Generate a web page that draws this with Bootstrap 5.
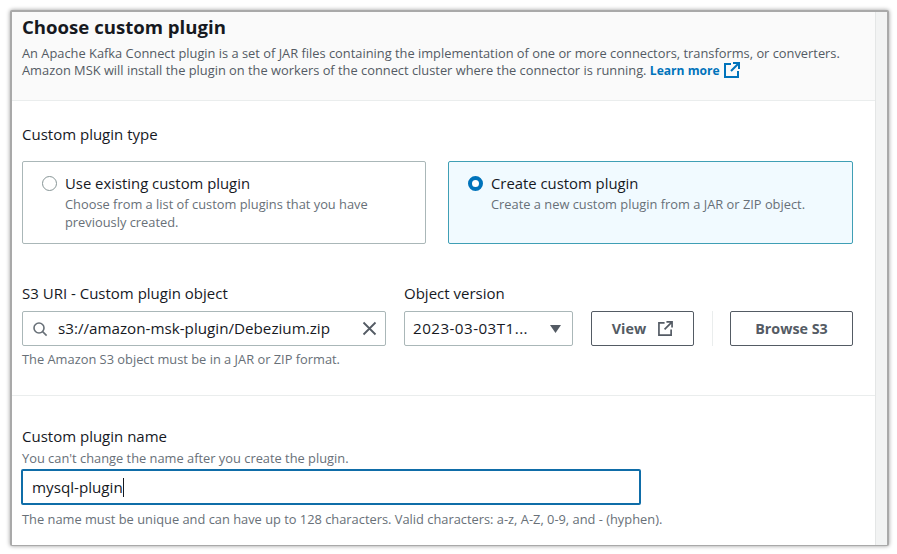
<!DOCTYPE html>
<html lang="en">
<head>
  <meta charset="UTF-8" />
  <meta name="viewport" content="width=device-width, initial-scale=1" />
  <title>Choose custom plugin</title>
  <link href="https://cdn.jsdelivr.net/npm/bootstrap@5.3.0/dist/css/bootstrap.min.css" rel="stylesheet" />
  <style>
    html, body { height: 554px; overflow: hidden; }
    body {
      background: #fff;
      font-family: "Open Sans", "Liberation Sans", sans-serif;
      color: #16191f;
      padding: 10px 8px 8px 10px;
    }
    .shot-frame {
      height: 536px;
      background: #fff;
      border: 1px solid #a9a9a9;
      border-left-width: 2px;
      border-top-width: 2px;
      border-right-width: 2px;
      border-radius: 2px;
      box-shadow: 0 0 4px rgba(0,0,0,.4);
      overflow: hidden;
    }
    .shot-main { flex: 1 1 auto; min-width: 0; }
    .shot-strip { width: 12px; background: #f2f3f3; border-left: 1px solid #e4e6e6; }
    .panel-head {
      height: 89px;
      background: #fafafa;
      border-bottom: 1px solid #eaeded;
      padding: 3px 12px 0 10px;
    }
    .panel-head h2 { font-size: 18.6px; font-weight: 700; line-height: 24px; margin: 0 0 6px; color: #16191f; }
    .panel-head p { font-size: 12.85px; line-height: 17px; margin: 0; color: #545b64; white-space: nowrap; }
    .learn-link { color: #0073bb; font-weight: 700; font-size: 12.1px; text-decoration: none; }
    .panel-body-top { padding: 24px 13px 0 10px; border-bottom: 1px solid #eaeded; height: 295px; }
    .field-label { font-size: 15px; line-height: 18px; color: #16191f; margin: 0; white-space: nowrap; }
    .tile-row { display: flex; gap: 22px; margin-top: 18px; }
    .tile {
      flex: 0 0 404px;
      height: 83px;
      border: 1px solid #aab7b8;
      border-radius: 2px;
      padding: 12px 19px;
      display: flex;
      gap: 8px;
    }
    .tile.picked { flex-basis: 405px; background: #f1faff; border-color: #3f9fb5; }
    .dot { width: 15px; height: 15px; border-radius: 50%; border: 1px solid #879596; margin-top: 2px; flex: none; background: #fff; }
    .dot.on { border: 4.5px solid #0073bb; }
    .tile-title { font-size: 14.85px; line-height: 19px; color: #16191f; white-space: nowrap; }
    .tile-desc { font-size: 12.85px; line-height: 17.5px; color: #687078; white-space: nowrap; margin-top: 3px; }
    .s3-row { display: flex; margin-top: 40px; }
    .s3-uri { width: 364px; margin-right: 18px; }
    .s3-ver { width: 169px; margin-right: 18px; }
    .box-ctl {
      height: 35px;
      border: 1px solid #aab7b8;
      border-radius: 2px;
      background: #fff;
      display: flex;
      align-items: center;
      font-size: 15.2px;
      color: #16191f;
      margin-top: 9px;
    }
    .box-ctl .val { flex: 1 1 auto; white-space: nowrap; overflow: hidden; }
    .uri-icon { margin: 0 10px 0 9px; flex: none; }
    .version-val { letter-spacing: .45px; }
    .help-line { font-size: 12.85px; line-height: 14px; color: #687078; margin: 6px 0 0; white-space: nowrap; }
    .aws-btn {
      height: 35px;
      border: 1px solid #545b64;
      border-radius: 2px;
      background: #fff;
      color: #545b64;
      font-size: 14.3px;
      font-weight: 700;
      padding: 0;
      display: flex;
      align-items: center;
      justify-content: center;
      gap: 12px;
      margin-top: 27px;
    }
    .aws-btn:hover { background: #fff; color: #545b64; border-color: #545b64; }
    .btn-view { width: 103px; }
    .btn-browse { width: 123px; }
    .v-rule { width: 1px; height: 35px; background: #eaeded; margin: 27px 17px 0 18px; }
    .panel-body-end { padding: 31px 10px 0 10px; }
    .hint-top { font-size: 12.85px; line-height: 14px; color: #687078; margin: 6px 0 4px; white-space: nowrap; }
    .name-input.form-control {
      width: 620px;
      height: 36px;
      margin-left: -1px;
      border: 2px solid #0f6da8;
      border-radius: 2px;
      box-shadow: none;
      font-size: 15.2px;
      color: #16191f;
      padding: 0 9px;
      display: flex;
      align-items: center;
      background: #fff;
    }
    .name-input + .help-line { margin-top: 7px; }
    .caret-bar { display: inline-block; width: 1px; height: 19px; background: #16191f; }
  </style>
</head>
<body>
  <div class="shot-frame d-flex">
    <div class="shot-main">
      <div class="panel-head">
        <h2>Choose custom plugin</h2>
        <p>An Apache Kafka Connect plugin is a set of JAR files containing the implementation of one or more connectors, transforms, or converters.<br>Amazon MSK will install the plugin on the workers of the connect cluster where the connector is running. <a class="learn-link" href="#">Learn more
          <svg width="16" height="16" viewBox="0 0 16 16" fill="none" stroke="#0073bb" stroke-width="2" style="vertical-align:-3px;margin-left:1px"><path d="M7 2H1v13h13V9"/><path d="M9 1h6v6M15 1 7 9"/></svg></a></p>
      </div>

      <div class="panel-body-top">
        <p class="field-label">Custom plugin type</p>
        <div class="tile-row">
          <div class="tile">
            <span class="dot"></span>
            <div>
              <div class="tile-title">Use existing custom plugin</div>
              <div class="tile-desc">Choose from a list of custom plugins that you have<br>previously created.</div>
            </div>
          </div>
          <div class="tile picked">
            <span class="dot on"></span>
            <div>
              <div class="tile-title">Create custom plugin</div>
              <div class="tile-desc">Create a new custom plugin from a JAR or ZIP object.</div>
            </div>
          </div>
        </div>

        <div class="s3-row">
          <div class="s3-uri">
            <p class="field-label">S3 URI - Custom plugin object</p>
            <div class="box-ctl">
              <svg class="uri-icon" width="16" height="16" viewBox="0 0 16 16" fill="none" stroke="#687078" stroke-width="1.6"><circle cx="7" cy="7" r="5"/><path d="m10.6 10.6 4 4"/></svg>
              <span class="val">s3://amazon-msk-plugin/Debezium.zip</span>
              <svg class="me-2" width="15" height="15" viewBox="0 0 15 15" fill="none" stroke="#545b64" stroke-width="1.8"><path d="m1.5 1.5 12 12M13.5 1.5l-12 12"/></svg>
            </div>
          </div>
          <div class="s3-ver">
            <p class="field-label">Object version</p>
            <div class="box-ctl ps-2">
              <span class="val version-val">2023-03-03T1...</span>
              <svg style="margin-right:10px;flex:none" width="13" height="10" viewBox="0 0 13 10"><path d="M1 1h11L6.5 9z" fill="#545b64"/></svg>
            </div>
          </div>
          <button type="button" class="btn aws-btn btn-view">View
            <svg width="15" height="15" viewBox="0 0 16 16" fill="none" stroke="#545b64" stroke-width="1.8"><path d="M7 2H1v13h13V9"/><path d="M9 1h6v6M15 1 7 9"/></svg>
          </button>
          <span class="v-rule"></span>
          <button type="button" class="btn aws-btn btn-browse">Browse S3</button>
        </div>
        <p class="help-line">The Amazon S3 object must be in a JAR or ZIP format.</p>
      </div>

      <div class="panel-body-end">
        <p class="field-label">Custom plugin name</p>
        <p class="hint-top">You can't change the name after you create the plugin.</p>
        <div class="form-control name-input"><span>mysql-plugin</span><span class="caret-bar"></span></div>
        <p class="help-line">The name must be unique and can have up to 128 characters. Valid characters: a-z, A-Z, 0-9, and - (hyphen).</p>
      </div>
    </div>
    <div class="shot-strip"></div>
  </div>
</body>
</html>
